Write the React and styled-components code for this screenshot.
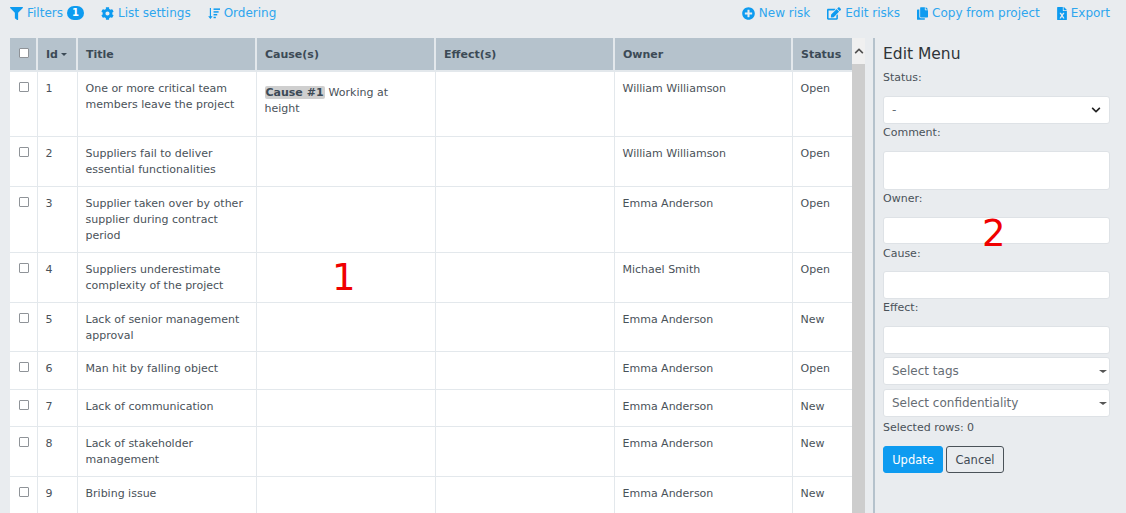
import styled, { createGlobalStyle } from 'styled-components';
import { FaFilter, FaCog, FaPlusCircle, FaEdit, FaCopy, FaFileExcel, FaChevronUp, FaChevronDown } from 'react-icons/fa';

const GlobalStyle = createGlobalStyle`
  html, body { margin: 0; height: 100%; overflow: hidden; }
  body {
    background: #e9ecef;
    font-family: "DejaVu Sans", Verdana, sans-serif;
    font-size: 11px;
    color: #3f4a54;
  }
`;

const Page = styled.div`
  position: relative;
  width: 1126px;
  height: 513px;
  overflow: hidden;
`;

const Toolbar = styled.div`
  display: flex;
  justify-content: space-between;
  height: 38px;
  padding: 5px 16px 0 10px;
  box-sizing: border-box;
`;

const ToolGroup = styled.div`
  display: flex;
  gap: 17px;
  height: 16px;
  align-items: center;
`;

const ToolLink = styled.a`
  display: flex;
  align-items: center;
  gap: 4px;
  color: #2ea6ee;
  font-size: 12px;
  white-space: nowrap;
  svg { color: #0d9bf0; height: 13px; width: ${(p) => p.$icon || 13}px; flex: none; }
`;

const Badge = styled.span`
  background: #0d9bf0;
  color: #fff;
  border-radius: 8px;
  font-size: 10px;
  font-weight: bold;
  line-height: 14px;
  width: 17px;
  text-align: center;
`;

const Content = styled.div`
  display: flex;
`;

const TableArea = styled.div`
  margin-left: 10px;
  width: 842px;
  height: 475px;
  overflow: hidden;
  flex: none;
`;

const Table = styled.table`
  table-layout: fixed;
  border-collapse: collapse;
  width: 842px;
  background: #fff;
`;

const HeadCell = styled.th`
  background: #b5c2cc;
  height: 33px;
  box-sizing: border-box;
  padding: 0 8px;
  text-align: left;
  font-size: 11px;
  font-weight: bold;
  color: #3c4a56;
  border-left: 2px solid #e3e8ec;
  border-bottom: 2px solid #e3e8ec;
  &:first-child { border-left: 0; }
`;

const Cell = styled.td`
  vertical-align: top;
  padding: 9px 8px 0;
  line-height: 16.4px;
  font-size: 11px;
  color: #4a5259;
  border-left: 1px solid #e3e8ec;
  border-bottom: 1px solid #e3e8ec;
  &:first-child { border-left: 0; }
`;

const Row = styled.tr`
  height: ${(p) => p.$h}px;
`;

const Check = styled.span`
  display: block;
  box-sizing: border-box;
  width: 10px;
  height: 10px;
  background: #fff;
  border: 1px solid #8f9398;
  border-radius: 1px;
  margin-left: 1px;
  margin-top: ${(p) => (p.$head ? '-2px' : '1px')};
`;

const SortCaret = styled.span`
  display: inline-block;
  margin-left: 3px;
  vertical-align: middle;
  border-left: 3px solid transparent;
  border-right: 3px solid transparent;
  border-top: 3px solid #3c4a56;
`;

const CauseTag = styled.span`
  background: #cfcfcf;
  border-radius: 2px;
  font-weight: bold;
  padding: 0 1px;
  margin-right: 4px;
  color: #3c4a56;
`;

const CauseText = styled.div`
  margin-top: 4px;
`;

const Scrollbar = styled.div`
  flex: none;
  width: 13px;
  height: 475px;
  background: #cdcdcd;
`;

const ScrollButton = styled.div`
  height: 26px;
  background: #f0f0f0;
  display: flex;
  align-items: center;
  justify-content: center;
  color: #505050;
  font-size: 10px;
`;

const EditPanel = styled.div`
  flex: none;
  margin-left: 8px;
  width: 253px;
  box-sizing: border-box;
  height: 475px;
  border-left: 2px solid #b5c2cc;
  padding: 7px 16px 0 8px;
  display: flex;
  flex-direction: column;
`;

const PanelTitle = styled.div`
  font-size: 15.5px;
  line-height: 18px;
  color: #2f3438;
  margin-bottom: 8px;
`;

const Label = styled.div`
  font-size: 11px;
  line-height: 14px;
  color: #4a5259;
  margin-top: ${(p) => p.$top || 0}px;
  margin-bottom: ${(p) => p.$gap}px;
`;

const Field = styled.div`
  height: ${(p) => p.$h}px;
  box-sizing: border-box;
  background: #fff;
  border: 1px solid #dee2e6;
  border-radius: 3px;
  display: flex;
  align-items: center;
  justify-content: space-between;
  padding: 0 8px;
  margin-bottom: ${(p) => p.$gap || 0}px;
  color: #666d74;
  font-size: 12px;
  flex: none;
`;

const DownCaret = styled.span`
  border-left: 4px solid transparent;
  border-right: 4px solid transparent;
  border-top: 3px solid #555;
  margin-right: -6px;
`;

const ButtonRow = styled.div`
  display: flex;
  gap: 3px;
  margin-top: 6px;
`;

const Button = styled.button`
  height: 27px;
  box-sizing: border-box;
  padding: 0;
  width: ${(p) => p.$w}px;
  border-radius: 3px;
  font-family: inherit;
  font-size: 11.5px;
  background: ${(p) => (p.$primary ? '#0d9bf0' : 'transparent')};
  color: ${(p) => (p.$primary ? '#fff' : '#3f4a54')};
  border: 1px solid ${(p) => (p.$primary ? '#0d9bf0' : '#4a5259')};
`;

const Annotation = styled.span`
  position: absolute;
  left: ${(p) => p.$x}px;
  top: ${(p) => p.$y}px;
  color: #f00000;
  font-family: "DejaVu Sans", sans-serif;
  font-size: 37px;
  line-height: 40px;
`;

// no matching icon in the packages: arrow plus shrinking bars
const OrderingIcon = () => (
  <svg viewBox="0 0 13 13" fill="currentColor">
    <path d="M2 0.5h1.2v9H5L2.6 12.5 0.2 9.5H2z" />
    <rect x="6" y="1" width="7" height="1.6" />
    <rect x="6" y="4" width="5.5" height="1.6" />
    <rect x="6" y="7" width="4" height="1.6" />
    <rect x="6" y="10" width="2.5" height="1.6" />
  </svg>
);

const rows = [
  { id: 1, h: 65, title: 'One or more critical team members leave the project', cause: 'Working at height', owner: 'William Williamson', status: 'Open' },
  { id: 2, h: 50, title: 'Suppliers fail to deliver essential functionalities', owner: 'William Williamson', status: 'Open' },
  { id: 3, h: 66, title: 'Supplier taken over by other supplier during contract period', owner: 'Emma Anderson', status: 'Open' },
  { id: 4, h: 50, title: 'Suppliers underestimate complexity of the project', owner: 'Michael Smith', status: 'Open' },
  { id: 5, h: 49, title: 'Lack of senior management approval', owner: 'Emma Anderson', status: 'New' },
  { id: 6, h: 38, title: 'Man hit by falling object', owner: 'Emma Anderson', status: 'Open' },
  { id: 7, h: 37, title: 'Lack of communication', owner: 'Emma Anderson', status: 'New' },
  { id: 8, h: 50, title: 'Lack of stakeholder management', owner: 'Emma Anderson', status: 'New' },
  { id: 9, h: 38, title: 'Bribing issue', owner: 'Emma Anderson', status: 'New' },
];

const widths = [27, 40, 179, 179, 179, 178, 60];

const App = () => {
  return (
    <Page>
      <GlobalStyle />
      <Toolbar>
        <ToolGroup>
          <ToolLink><FaFilter />Filters<Badge>1</Badge></ToolLink>
          <ToolLink><FaCog />List settings</ToolLink>
          <ToolLink $icon={12}><OrderingIcon />Ordering</ToolLink>
        </ToolGroup>
        <ToolGroup>
          <ToolLink><FaPlusCircle />New risk</ToolLink>
          <ToolLink $icon={14}><FaEdit />Edit risks</ToolLink>
          <ToolLink $icon={11}><FaCopy />Copy from project</ToolLink>
          <ToolLink $icon={10}><FaFileExcel />Export</ToolLink>
        </ToolGroup>
      </Toolbar>
      <Content>
        <TableArea>
          <Table>
            <colgroup>
              {widths.map((w, i) => <col key={i} style={{ width: w }} />)}
            </colgroup>
            <thead>
              <tr>
                <HeadCell><Check $head /></HeadCell>
                <HeadCell>Id<SortCaret /></HeadCell>
                <HeadCell>Title</HeadCell>
                <HeadCell>Cause(s)</HeadCell>
                <HeadCell>Effect(s)</HeadCell>
                <HeadCell>Owner</HeadCell>
                <HeadCell>Status</HeadCell>
              </tr>
            </thead>
            <tbody>
              {rows.map((r) => (
                <Row key={r.id} $h={r.h}>
                  <Cell><Check /></Cell>
                  <Cell>{r.id}</Cell>
                  <Cell>{r.title}</Cell>
                  <Cell>
                    {r.cause && <CauseText><CauseTag>Cause #1</CauseTag>{r.cause}</CauseText>}
                  </Cell>
                  <Cell />
                  <Cell>{r.owner}</Cell>
                  <Cell>{r.status}</Cell>
                </Row>
              ))}
            </tbody>
          </Table>
        </TableArea>
        <Scrollbar>
          <ScrollButton><FaChevronUp /></ScrollButton>
        </Scrollbar>
        <EditPanel>
          <PanelTitle>Edit Menu</PanelTitle>
          <Label $gap={11}>Status:</Label>
          <Field $h={28}>- <FaChevronDown size={10} color="#222" /></Field>
          <Label $top={2} $gap={11}>Comment:</Label>
          <Field $h={39}></Field>
          <Label $top={2} $gap={11}>Owner:</Label>
          <Field $h={27}></Field>
          <Label $top={3} $gap={10}>Cause:</Label>
          <Field $h={28}></Field>
          <Label $top={2} $gap={11}>Effect:</Label>
          <Field $h={28} $gap={3}></Field>
          <Field $h={28} $gap={4}>Select tags<DownCaret /></Field>
          <Field $h={28}>Select confidentiality<DownCaret /></Field>
          <Label $top={4} $gap={5}>Selected rows: 0</Label>
          <ButtonRow>
            <Button $primary $w={60}>Update</Button>
            <Button $w={58}>Cancel</Button>
          </ButtonRow>
        </EditPanel>
      </Content>
      <Annotation $x={332} $y={258}>1</Annotation>
      <Annotation $x={982} $y={214}>2</Annotation>
    </Page>
  );
};

export default App;
